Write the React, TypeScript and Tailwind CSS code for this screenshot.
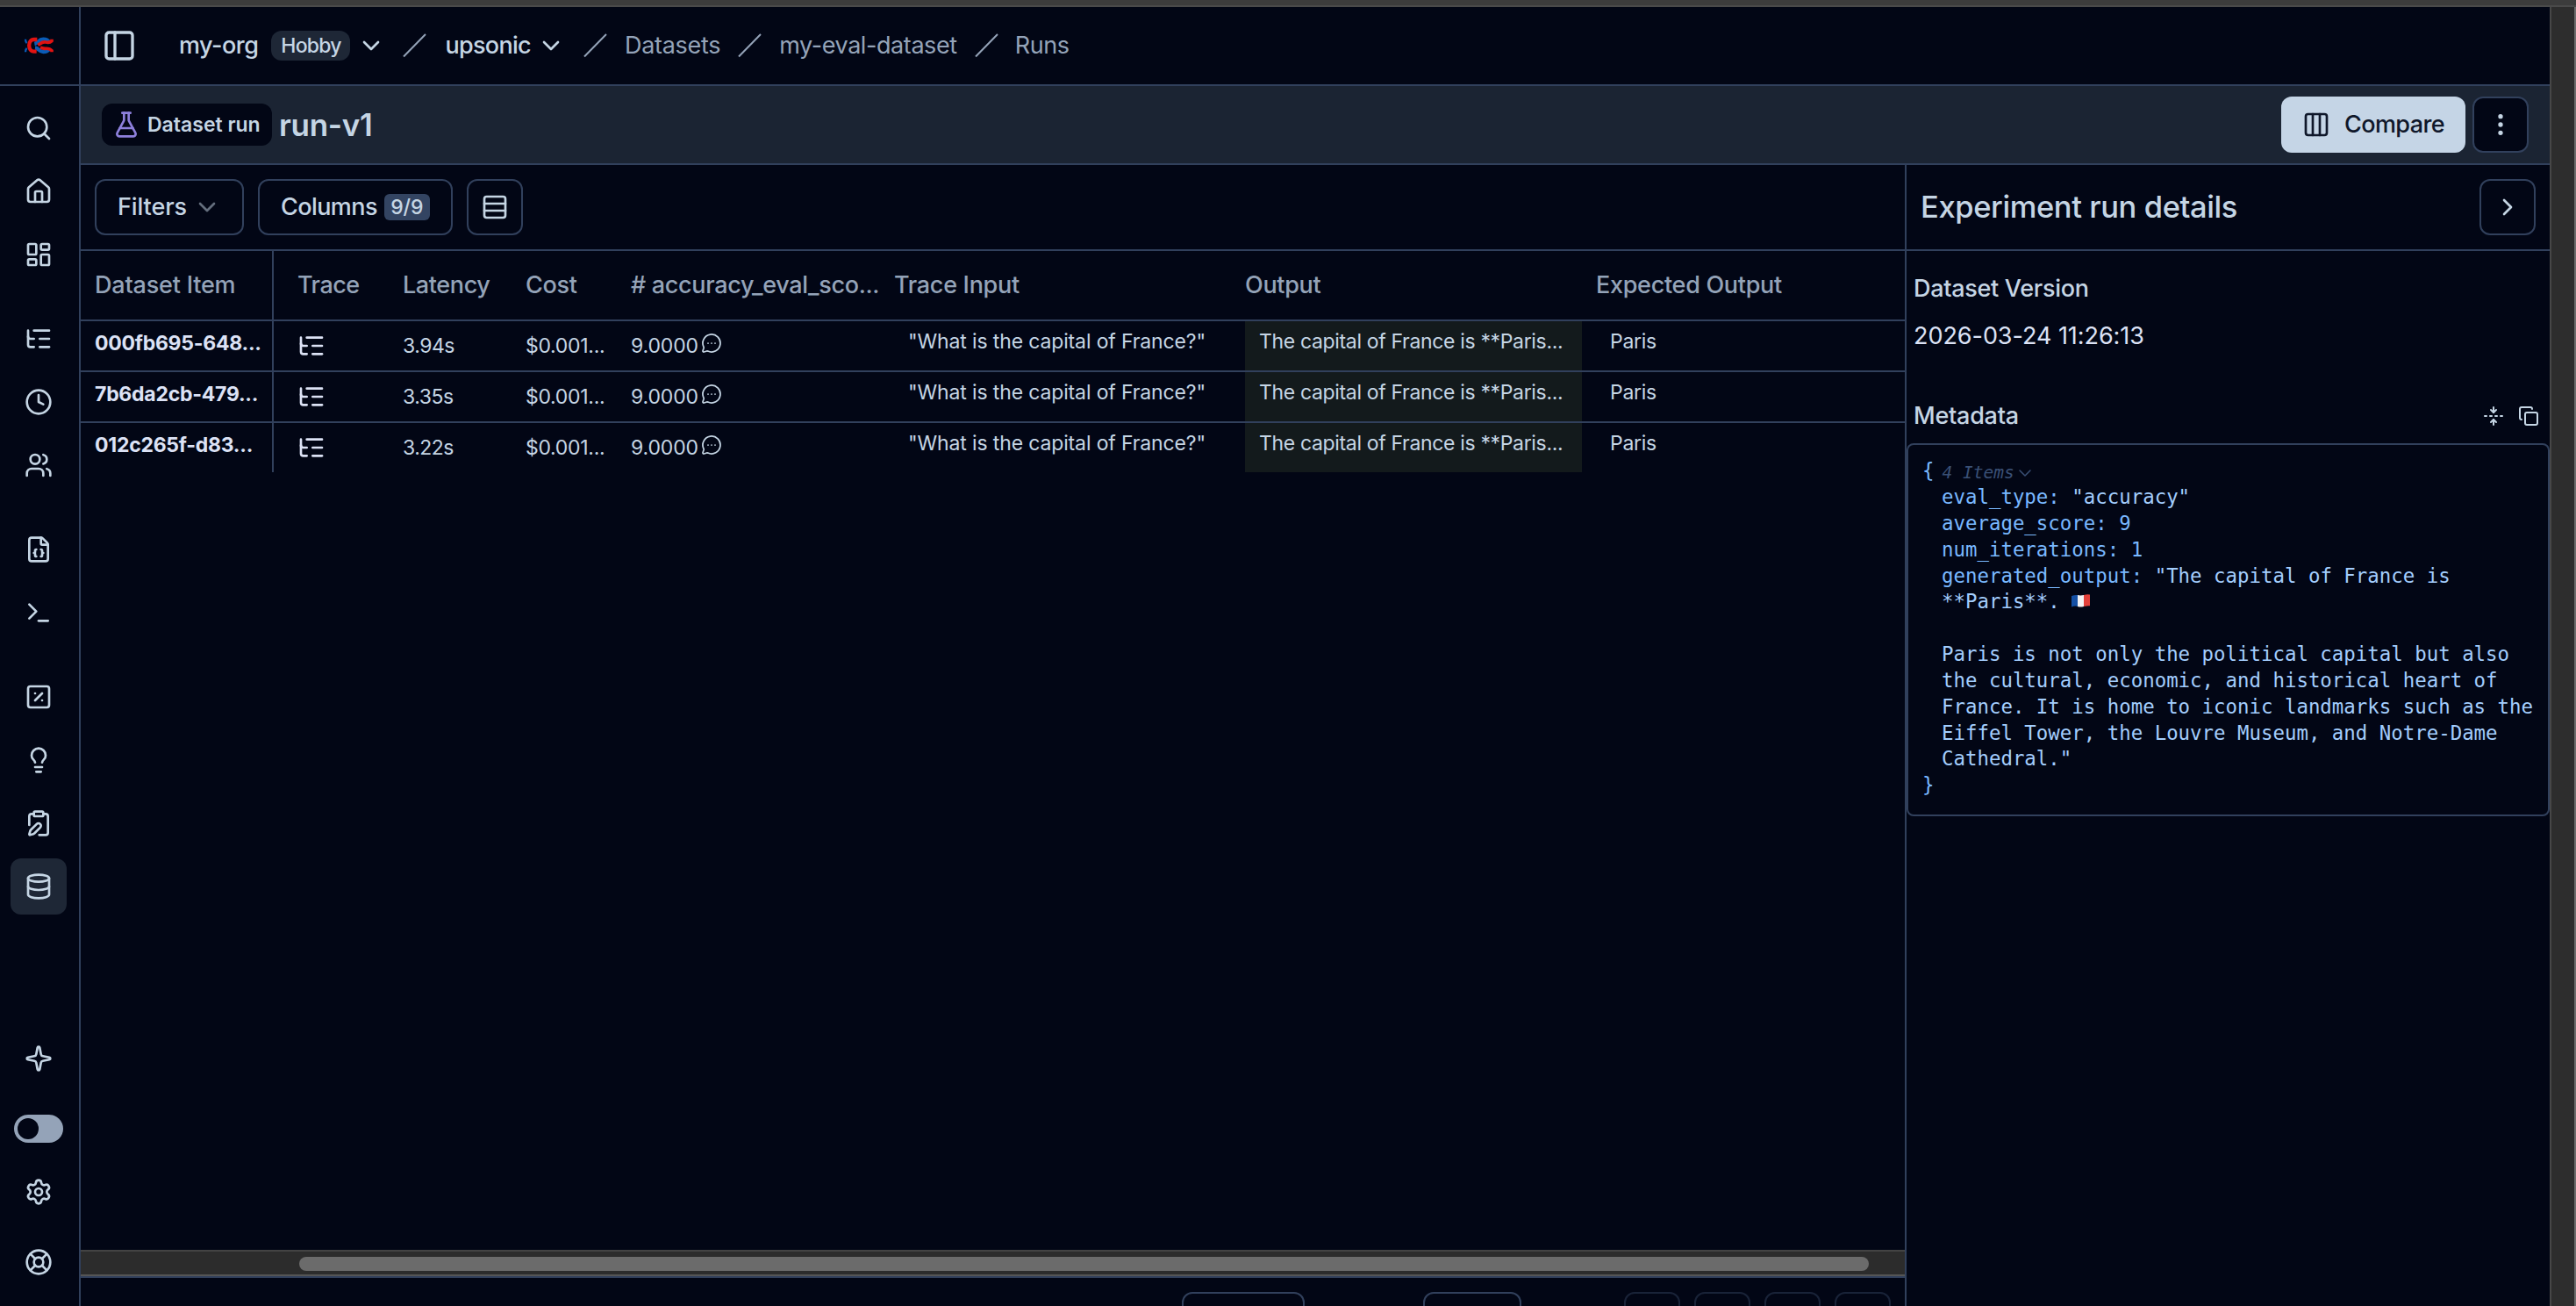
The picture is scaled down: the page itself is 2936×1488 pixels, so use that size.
import type { ReactNode } from "react";
import {
  ChevronDown,
  ChevronRight,
  ClipboardPen,
  Clock,
  Columns3,
  Copy,
  Database,
  EllipsisVertical,
  FileBraces,
  FlaskConical,
  FoldVertical,
  House,
  LayoutDashboard,
  LifeBuoy,
  Lightbulb,
  ListTree,
  MessageCircleMore,
  PanelLeft,
  Rows3,
  Search,
  Settings,
  Sparkle,
  SquarePercent,
  Terminal,
  Users,
} from "lucide-react";
import type { LucideIcon } from "lucide-react";

const navGroups: LucideIcon[][] = [
  [Search, House, LayoutDashboard],
  [ListTree, Clock, Users],
  [FileBraces, Terminal],
  [SquarePercent, Lightbulb, ClipboardPen, Database],
];

const runItems = [
  { id: "000fb695-648...", latency: "3.94s" },
  { id: "7b6da2cb-479...", latency: "3.35s" },
  { id: "012c265f-d83...", latency: "3.22s" },
];

const GRID = "grid grid-cols-[220px_147px_140px_120px_300px_400px_400px_1fr]";

function Logo() {
  return (
    <svg width="40" height="40" viewBox="0 0 120 120" fill="none" strokeWidth="13">
      <path d="M15 32 C15 38 16 42 20 45 M15 76 C15 70 16 66 20 63" stroke="#0a5cb8" strokeWidth="7" />
      <path d="M46 48 C58 46 60 32 76 32 C86 32 92 35 97 42" stroke="#0a5cb8" />
      <path d="M48 61 C60 62 62 75 76 75 C86 75 92 72 97 65" stroke="#0a5cb8" />
      <path d="M55 33 H44 C22 33 22 74 44 74 H53" stroke="#e11312" />
      <path d="M105 32 V38 C98 45 92 44 84 42 C72 40 68 46 58 52" stroke="#e11312" strokeWidth="11" />
      <path d="M105 76 V71 C98 63 92 63 82 64 C76 64 72 62 66 60" stroke="#e11312" strokeWidth="11" />
    </svg>
  );
}

function NavItem({ icon: Icon, active }: { icon: LucideIcon; active?: boolean }) {
  return (
    <div
      className={`flex size-16 items-center justify-center rounded-xl ${active ? "bg-[#1e2736]" : ""}`}
    >
      <Icon className="size-8" />
    </div>
  );
}

function Sidebar() {
  return (
    <aside className="flex w-[92px] shrink-0 flex-col border-r-2 border-[#31405c]">
      <div className="flex h-[90px] shrink-0 items-center border-b-2 border-[#31405c] pt-1 pl-6">
        <Logo />
      </div>
      <nav className="flex flex-col gap-8 pt-4 pl-3">
        {navGroups.map((group, i) => (
          <div key={i} className="flex flex-col gap-2">
            {group.map((icon, j) => (
              <NavItem key={j} icon={icon} active={icon === Database} />
            ))}
          </div>
        ))}
      </nav>
      <div className="mt-auto flex flex-col pb-[18px] pl-3">
        <NavItem icon={Sparkle} />
        <div className="mx-1 my-8 flex h-8 w-14 items-center rounded-full bg-[#94a3b8] p-1">
          <div className="size-6 rounded-full bg-[#020615]" />
        </div>
        <div className="-mt-2 flex flex-col gap-4">
          <NavItem icon={Settings} />
          <NavItem icon={LifeBuoy} />
        </div>
      </div>
    </aside>
  );
}

function Slash({ className }: { className: string }) {
  return (
    <svg className={className} width="27" height="28" viewBox="0 0 27 28" fill="none">
      <path d="M1 26.5 L26 1" stroke="#94a3b8" strokeWidth="2" />
    </svg>
  );
}

function Breadcrumb() {
  return (
    <header className="flex h-[90px] shrink-0 items-center border-b-2 border-[#31405c] pl-6 text-[27px] font-medium">
      <PanelLeft className="size-10" />
      <span className="ml-12 tracking-[-0.5px]">my-org</span>
      <span className="ml-[15px] flex h-[34px] w-[90px] items-center justify-center rounded-xl bg-[#1e2736] text-[23px] tracking-[-0.8px]">
        Hobby
      </span>
      <ChevronDown className="ml-2 size-8" />
      <Slash className="ml-5" />
      <span className="ml-[21px] tracking-[-0.7px]">upsonic</span>
      <ChevronDown className="ml-[7px] size-8" />
      <Slash className="ml-[21px]" />
      <div className="flex items-center font-normal text-[#94a3b8]">
        <span className="ml-5 tracking-[-0.3px]">Datasets</span>
        <Slash className="ml-5" />
        <span className="ml-5 tracking-[-0.42px]">my-eval-dataset</span>
        <Slash className="ml-5" />
        <span className="ml-[19px] tracking-[-0.4px]">Runs</span>
      </div>
    </header>
  );
}

function PageHeader() {
  return (
    <div className="flex h-[90px] shrink-0 items-center border-b-2 border-[#31405c] bg-[#1b2433] pr-6 pl-6">
      <div className="flex h-12 w-[194px] items-center rounded-xl bg-[#020615] pl-3 text-[23px] font-semibold">
        <FlaskConical className="size-8 text-[#8d80dc]" />
        <span className="ml-2 whitespace-nowrap">Dataset run</span>
      </div>
      <h1 className="ml-2 text-[35px] font-semibold tracking-[-0.3px]">run-v1</h1>
      <button className="ml-auto flex h-16 w-[210px] items-center rounded-xl bg-[#c5d5e6] pl-6 text-[27px] font-medium tracking-[-0.6px] text-[#0f172a]">
        <Columns3 className="size-8" />
        <span className="ml-4">Compare</span>
      </button>
      <button className="ml-2 flex size-16 items-center justify-center rounded-xl border-2 border-[#31405c] bg-[#020615]">
        <EllipsisVertical className="size-8" />
      </button>
    </div>
  );
}

function Toolbar() {
  return (
    <div className="flex h-[98px] shrink-0 items-center gap-4 border-b-2 border-[#31405c] pl-4 text-[27px] font-medium">
      <button className="flex h-16 w-[170px] items-center rounded-xl border-2 border-[#31405c] pl-6">
        <span className="tracking-[-0.1px]">Filters</span>
        <ChevronDown className="ml-[7px] size-8 opacity-50" />
      </button>
      <button className="flex h-16 w-[222px] items-center rounded-xl border-2 border-[#31405c] pl-6">
        <span className="tracking-[-0.58px]">Columns</span>
        <span className="ml-2 flex h-[30px] w-[52px] items-center justify-center rounded-md bg-[#334462] text-[23px]">
          9/9
        </span>
      </button>
      <button className="flex size-16 items-center justify-center rounded-xl border-2 border-[#31405c]">
        <Rows3 className="size-8" />
      </button>
    </div>
  );
}

function Cell({ children, className = "" }: { children: ReactNode; className?: string }) {
  return <div className={`flex items-start overflow-hidden whitespace-nowrap ${className}`}>{children}</div>;
}

function RunsTable() {
  return (
    <div className="flex-1 overflow-hidden">
      <div
        className={`${GRID} h-20 border-b-2 border-[#31405c] text-[27px] leading-[78px] font-medium tracking-[-0.3px] text-[#94a3b8]`}
      >
        <div className="border-r-2 border-[#31405c] pl-4 tracking-[-0.2px]">Dataset Item</div>
        <div className="pl-[27px] tracking-[-0.5px]">Trace</div>
        <div className="tracking-[-0.4px]">Latency</div>
        <div>Cost</div>
        <div className="whitespace-nowrap tracking-[-0.32px]">
          # accuracy_eval_sco...
        </div>
        <div>Trace Input</div>
        <div>Output</div>
        <div>Expected Output</div>
      </div>
      {runItems.map((item, i) => (
        <div
          key={item.id}
          className={`${GRID} text-[23px] leading-[30px] tracking-[-0.14px] ${
            i < runItems.length - 1 ? "h-[58px] border-b-2 border-[#31405c]" : "h-14"
          }`}
        >
          <Cell className="border-r-2 border-[#31405c] pt-2.5 pl-4 font-bold tracking-[-0.25px] text-[#dce2f5]">
            {item.id}
          </Cell>
          <Cell className="pt-3 pl-[27px] text-[#dce2f5]">
            <ListTree className="size-8" />
          </Cell>
          <Cell className="pt-[13px] tracking-[-0.5px]">{item.latency}</Cell>
          <Cell className="pt-[13px] tracking-[-0.3px]">$0.001...</Cell>
          <Cell className="pt-[13px]">
            <span>9.0000</span>
            <MessageCircleMore className="ml-[3px] size-6" strokeWidth={1.75} />
          </Cell>
          <Cell className="pt-2 pl-4">"What is the capital of France?"</Cell>
          <Cell className="mr-4 bg-[#131a1c] pt-2 pl-4 tracking-[-0.34px]">
            The capital of France is **Paris...
          </Cell>
          <Cell className="pt-2 pl-4 tracking-[-0.3px]">Paris</Cell>
        </div>
      ))}
    </div>
  );
}

function Pagination() {
  return (
    <div className="flex h-[34px] shrink-0 items-start justify-end overflow-hidden border-t-2 border-[#31405c] pt-4 pr-4">
      <div className="h-16 w-[140px] rounded-xl border-2 border-[#31405c]" />
      <div className="ml-[135px] h-16 w-28 rounded-xl border-2 border-[#31405c]" />
      <div className="ml-[117px] flex gap-4 opacity-50">
        {[0, 1, 2, 3].map((n) => (
          <div key={n} className="size-16 rounded-xl border-2 border-[#31405c]" />
        ))}
      </div>
    </div>
  );
}

function Flag() {
  return (
    <svg className="mb-1 ml-[13px] inline-block" width="21" height="15" viewBox="0 0 21 15">
      <path d="M0 2 Q4 0.5 7 1 V14 Q4 13 0 14.5 Z" fill="#1550a5" />
      <path d="M7 1 Q10 1.8 14 1 V14 Q10 15 7 14 Z" fill="#f2f2f4" />
      <path d="M14 1 Q18 -0.2 21 0.6 V13.2 Q18 13 14 14 Z" fill="#e2403a" />
    </svg>
  );
}

function JsonView() {
  return (
    <div className="h-[425px] rounded-lg border-2 border-[#31405c] pt-[15px] pl-4 font-['DejaVu_Sans_Mono',monospace] text-[22.4px] leading-[29.85px] whitespace-pre text-[#a3cdfd]">
      <div className="flex h-[30px] text-[#79b8ff]">
        <span>{"{"}</span>
        <span className="ml-[9px] flex h-[34px] items-center text-[19.5px] text-[#3a5075] italic">
          4 Items
          <ChevronDown className="size-6" strokeWidth={1.5} />
        </span>
      </div>
      <div className="pl-[22px]">
        <p>
          <span className="text-[#79b8ff]">eval_type: </span>"accuracy"
        </p>
        <p className="text-[#79b8ff]">average_score: 9</p>
        <p className="text-[#79b8ff]">num_iterations: 1</p>
        <p>
          <span className="text-[#79b8ff]">generated_output: </span>"The capital of France is
        </p>
        <p className="h-[29.85px]">
          **Paris**.
          <Flag />
        </p>
        <p> </p>
        <p>Paris is not only the political capital but also</p>
        <p>the cultural, economic, and historical heart of</p>
        <p>France. It is home to iconic landmarks such as the</p>
        <p>Eiffel Tower, the Louvre Museum, and Notre-Dame</p>
        <p>Cathedral."</p>
      </div>
      <p className="text-[#79b8ff]">{"}"}</p>
    </div>
  );
}

function DetailsPanel() {
  return (
    <section className="flex w-[735px] shrink-0 flex-col border-l-2 border-[#31405c]">
      <div className="flex h-[98px] shrink-0 items-center justify-between border-b-2 border-[#31405c] pr-4 pl-4">
        <h2 className="text-[34.5px] font-medium tracking-[-0.4px]">Experiment run details</h2>
        <button className="flex size-16 items-center justify-center rounded-xl border-2 border-[#31405c]">
          <ChevronRight className="size-8" />
        </button>
      </div>
      <div className="pt-[23px] pl-2 text-[27px] leading-10">
        <p className="font-medium tracking-[-0.3px]">Dataset Version</p>
        <p className="mt-[14px] tracking-[-0.05px] text-[#dce2f5]">2026-03-24 11:26:13</p>
      </div>
      <div className="mt-[51px] flex h-10 items-center pr-3 pl-2 text-[27px] font-medium tracking-[-0.25px]">
        <span>Metadata</span>
        <FoldVertical className="ml-auto size-6" />
        <Copy className="ml-4 size-6" />
      </div>
      <div className="mt-[11px]">
        <JsonView />
      </div>
    </section>
  );
}

export default function App() {
  return (
    <div className="flex h-[1488px] w-[2936px] flex-col overflow-hidden bg-[#020615] font-['Inter',sans-serif] text-[#c5d5e4]">
      <div className="h-2 shrink-0 border-b-2 border-[#4a4a4a] bg-[#3c3c3c]" />
      <div className="flex min-h-0 flex-1">
        <Sidebar />
        <div className="flex min-w-0 flex-1 flex-col">
          <Breadcrumb />
          <PageHeader />
          <div className="flex min-h-0 flex-1">
            <main className="flex min-w-0 flex-1 flex-col">
              <Toolbar />
              <RunsTable />
              <div className="flex h-[30px] shrink-0 items-center border-t-2 border-b-2 border-t-[#434343] border-b-[#555555] bg-[#2c2c2c] pt-px pr-[41px] pl-[249px]">
                <div className="h-4 flex-1 rounded-full bg-[#6b6b6b]" />
              </div>
              <Pagination />
            </main>
            <DetailsPanel />
          </div>
        </div>
        {/* Page scrollbar gutter */}
        <div className="w-[30px] shrink-0 border-r-2 border-l-2 border-l-[#474747] border-r-[#6b6b6b] bg-[#2d2d2d]" />
      </div>
    </div>
  );
}
